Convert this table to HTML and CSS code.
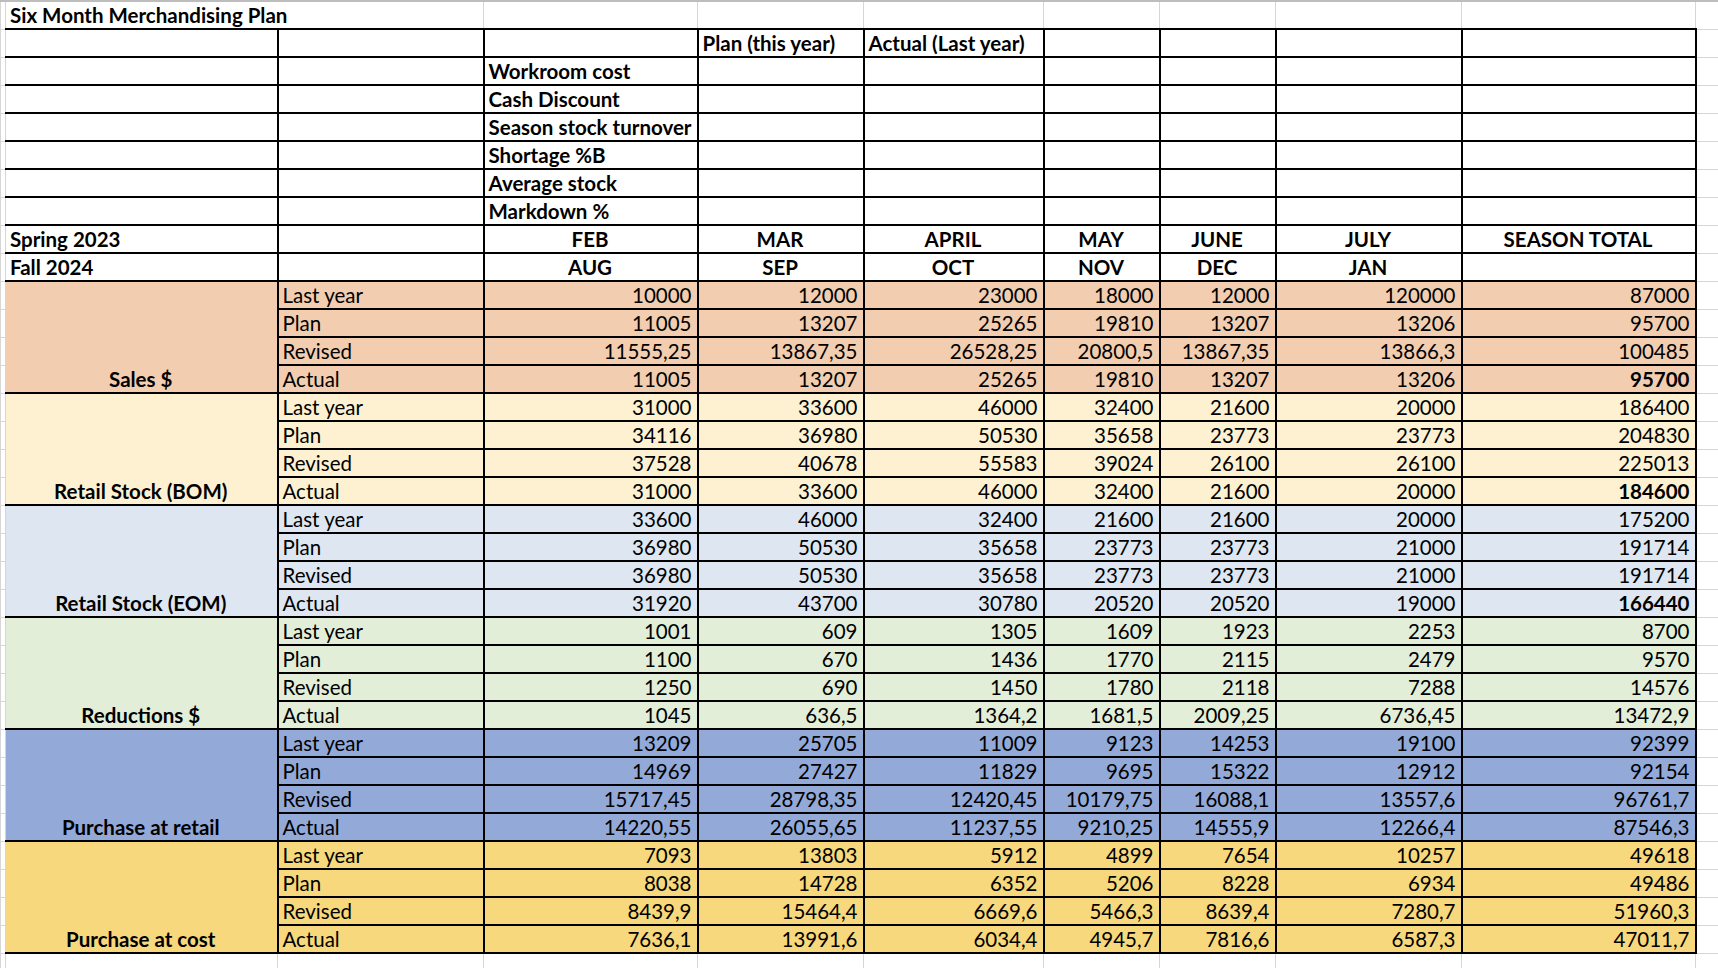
FILE: index.html
```html
<!DOCTYPE html>
<html lang="en">
<head>
<meta charset="utf-8">
<title>Six Month Merchandising Plan</title>
<link rel="stylesheet" href="styles.css">
</head>
<body>
<table class="sheet">
  <colgroup>
    <col class="w-stub"><col class="w-a"><col class="w-b"><col class="w-c"><col class="w-d"><col class="w-e"><col class="w-f"><col class="w-g"><col class="w-h"><col class="w-i"><col class="w-rstub">
  </colgroup>
  <tbody>
    <tr class="top">
      <td class="stub"></td><td class="bold" colspan="2">Six Month Merchandising Plan</td><td></td><td></td><td></td><td></td><td></td><td></td><td></td><td class="rstub"></td>
    </tr>
    <tr class="t">
      <td class="stub"></td><td class="ca"></td><td></td><td></td><td class="bold">Plan (this year)</td><td class="bold">Actual (Last year)</td><td></td><td></td><td></td><td></td><td class="rstub"></td>
    </tr>
    <tr class="t">
      <td class="stub"></td><td class="ca"></td><td></td><td class="bold">Workroom cost</td><td></td><td></td><td></td><td></td><td></td><td></td><td class="rstub"></td>
    </tr>
    <tr class="t">
      <td class="stub"></td><td class="ca"></td><td></td><td class="bold">Cash Discount</td><td></td><td></td><td></td><td></td><td></td><td></td><td class="rstub"></td>
    </tr>
    <tr class="t">
      <td class="stub"></td><td class="ca"></td><td></td><td class="bold">Season stock turnover</td><td></td><td></td><td></td><td></td><td></td><td></td><td class="rstub"></td>
    </tr>
    <tr class="t">
      <td class="stub"></td><td class="ca"></td><td></td><td class="bold">Shortage %B</td><td></td><td></td><td></td><td></td><td></td><td></td><td class="rstub"></td>
    </tr>
    <tr class="t">
      <td class="stub"></td><td class="ca"></td><td></td><td class="bold">Average stock</td><td></td><td></td><td></td><td></td><td></td><td></td><td class="rstub"></td>
    </tr>
    <tr class="t">
      <td class="stub"></td><td class="ca"></td><td></td><td class="bold">Markdown %</td><td></td><td></td><td></td><td></td><td></td><td></td><td class="rstub"></td>
    </tr>
    <tr class="t">
      <td class="stub"></td><td class="ca bold">Spring 2023</td><td></td><td class="hd">FEB</td><td class="hd">MAR</td><td class="hd">APRIL</td><td class="hd">MAY</td><td class="hd">JUNE</td><td class="hd">JULY</td><td class="hd">SEASON TOTAL</td><td class="rstub"></td>
    </tr>
    <tr class="t">
      <td class="stub"></td><td class="ca bold">Fall 2024</td><td></td><td class="hd">AUG</td><td class="hd">SEP</td><td class="hd">OCT</td><td class="hd">NOV</td><td class="hd">DEC</td><td class="hd">JAN</td><td></td><td class="rstub"></td>
    </tr>

    <tr class="t sales">
      <td class="stub"></td><td class="ca grp" rowspan="4">Sales $</td><td>Last year</td><td class="n">10000</td><td class="n">12000</td><td class="n">23000</td><td class="n">18000</td><td class="n">12000</td><td class="n">120000</td><td class="n">87000</td><td class="rstub"></td>
    </tr>
    <tr class="t sales">
      <td class="stub"></td><td>Plan</td><td class="n">11005</td><td class="n">13207</td><td class="n">25265</td><td class="n">19810</td><td class="n">13207</td><td class="n">13206</td><td class="n">95700</td><td class="rstub"></td>
    </tr>
    <tr class="t sales">
      <td class="stub"></td><td>Revised</td><td class="n">11555,25</td><td class="n">13867,35</td><td class="n">26528,25</td><td class="n">20800,5</td><td class="n">13867,35</td><td class="n">13866,3</td><td class="n">100485</td><td class="rstub"></td>
    </tr>
    <tr class="t sales">
      <td class="stub"></td><td>Actual</td><td class="n">11005</td><td class="n">13207</td><td class="n">25265</td><td class="n">19810</td><td class="n">13207</td><td class="n">13206</td><td class="n bold">95700</td><td class="rstub"></td>
    </tr>

    <tr class="t bom">
      <td class="stub"></td><td class="ca grp" rowspan="4">Retail Stock (BOM)</td><td>Last year</td><td class="n">31000</td><td class="n">33600</td><td class="n">46000</td><td class="n">32400</td><td class="n">21600</td><td class="n">20000</td><td class="n">186400</td><td class="rstub"></td>
    </tr>
    <tr class="t bom">
      <td class="stub"></td><td>Plan</td><td class="n">34116</td><td class="n">36980</td><td class="n">50530</td><td class="n">35658</td><td class="n">23773</td><td class="n">23773</td><td class="n">204830</td><td class="rstub"></td>
    </tr>
    <tr class="t bom">
      <td class="stub"></td><td>Revised</td><td class="n">37528</td><td class="n">40678</td><td class="n">55583</td><td class="n">39024</td><td class="n">26100</td><td class="n">26100</td><td class="n">225013</td><td class="rstub"></td>
    </tr>
    <tr class="t bom">
      <td class="stub"></td><td>Actual</td><td class="n">31000</td><td class="n">33600</td><td class="n">46000</td><td class="n">32400</td><td class="n">21600</td><td class="n">20000</td><td class="n bold">184600</td><td class="rstub"></td>
    </tr>

    <tr class="t eom">
      <td class="stub"></td><td class="ca grp" rowspan="4">Retail Stock (EOM)</td><td>Last year</td><td class="n">33600</td><td class="n">46000</td><td class="n">32400</td><td class="n">21600</td><td class="n">21600</td><td class="n">20000</td><td class="n">175200</td><td class="rstub"></td>
    </tr>
    <tr class="t eom">
      <td class="stub"></td><td>Plan</td><td class="n">36980</td><td class="n">50530</td><td class="n">35658</td><td class="n">23773</td><td class="n">23773</td><td class="n">21000</td><td class="n">191714</td><td class="rstub"></td>
    </tr>
    <tr class="t eom">
      <td class="stub"></td><td>Revised</td><td class="n">36980</td><td class="n">50530</td><td class="n">35658</td><td class="n">23773</td><td class="n">23773</td><td class="n">21000</td><td class="n">191714</td><td class="rstub"></td>
    </tr>
    <tr class="t eom">
      <td class="stub"></td><td>Actual</td><td class="n">31920</td><td class="n">43700</td><td class="n">30780</td><td class="n">20520</td><td class="n">20520</td><td class="n">19000</td><td class="n bold">166440</td><td class="rstub"></td>
    </tr>

    <tr class="t red">
      <td class="stub"></td><td class="ca grp" rowspan="4">Reductions $</td><td>Last year</td><td class="n">1001</td><td class="n">609</td><td class="n">1305</td><td class="n">1609</td><td class="n">1923</td><td class="n">2253</td><td class="n">8700</td><td class="rstub"></td>
    </tr>
    <tr class="t red">
      <td class="stub"></td><td>Plan</td><td class="n">1100</td><td class="n">670</td><td class="n">1436</td><td class="n">1770</td><td class="n">2115</td><td class="n">2479</td><td class="n">9570</td><td class="rstub"></td>
    </tr>
    <tr class="t red">
      <td class="stub"></td><td>Revised</td><td class="n">1250</td><td class="n">690</td><td class="n">1450</td><td class="n">1780</td><td class="n">2118</td><td class="n">7288</td><td class="n">14576</td><td class="rstub"></td>
    </tr>
    <tr class="t red">
      <td class="stub"></td><td>Actual</td><td class="n">1045</td><td class="n">636,5</td><td class="n">1364,2</td><td class="n">1681,5</td><td class="n">2009,25</td><td class="n">6736,45</td><td class="n">13472,9</td><td class="rstub"></td>
    </tr>

    <tr class="t pr">
      <td class="stub"></td><td class="ca grp" rowspan="4">Purchase at retail</td><td>Last year</td><td class="n">13209</td><td class="n">25705</td><td class="n">11009</td><td class="n">9123</td><td class="n">14253</td><td class="n">19100</td><td class="n">92399</td><td class="rstub"></td>
    </tr>
    <tr class="t pr">
      <td class="stub"></td><td>Plan</td><td class="n">14969</td><td class="n">27427</td><td class="n">11829</td><td class="n">9695</td><td class="n">15322</td><td class="n">12912</td><td class="n">92154</td><td class="rstub"></td>
    </tr>
    <tr class="t pr">
      <td class="stub"></td><td>Revised</td><td class="n">15717,45</td><td class="n">28798,35</td><td class="n">12420,45</td><td class="n">10179,75</td><td class="n">16088,1</td><td class="n">13557,6</td><td class="n">96761,7</td><td class="rstub"></td>
    </tr>
    <tr class="t pr">
      <td class="stub"></td><td>Actual</td><td class="n">14220,55</td><td class="n">26055,65</td><td class="n">11237,55</td><td class="n">9210,25</td><td class="n">14555,9</td><td class="n">12266,4</td><td class="n">87546,3</td><td class="rstub"></td>
    </tr>

    <tr class="t pc">
      <td class="stub"></td><td class="ca grp" rowspan="4">Purchase at cost</td><td>Last year</td><td class="n">7093</td><td class="n">13803</td><td class="n">5912</td><td class="n">4899</td><td class="n">7654</td><td class="n">10257</td><td class="n">49618</td><td class="rstub"></td>
    </tr>
    <tr class="t pc">
      <td class="stub"></td><td>Plan</td><td class="n">8038</td><td class="n">14728</td><td class="n">6352</td><td class="n">5206</td><td class="n">8228</td><td class="n">6934</td><td class="n">49486</td><td class="rstub"></td>
    </tr>
    <tr class="t pc">
      <td class="stub"></td><td>Revised</td><td class="n">8439,9</td><td class="n">15464,4</td><td class="n">6669,6</td><td class="n">5466,3</td><td class="n">8639,4</td><td class="n">7280,7</td><td class="n">51960,3</td><td class="rstub"></td>
    </tr>
    <tr class="t pc">
      <td class="stub"></td><td>Actual</td><td class="n">7636,1</td><td class="n">13991,6</td><td class="n">6034,4</td><td class="n">4945,7</td><td class="n">7816,6</td><td class="n">6587,3</td><td class="n">47011,7</td><td class="rstub"></td>
    </tr>

    <tr class="bot">
      <td class="stub"></td><td></td><td></td><td></td><td></td><td></td><td></td><td></td><td></td><td></td><td class="rstub"></td>
    </tr>
  </tbody>
</table>
</body>
</html>
```

FILE: styles.css
```css
html, body {
  margin: 0;
  padding: 0;
  background: #ffffff;
}

body {
  font-family: Lato, "Liberation Sans", sans-serif;
  font-size: 20.5px;
  color: #000000;
  overflow: hidden;
  width: 1718px;
  height: 968px;
}

.sheet {
  border-collapse: collapse;
  table-layout: fixed;
  width: 1718px;
}

.w-stub { width: 5px; }
.w-a { width: 272px; }
.w-b { width: 206px; }
.w-c { width: 214px; }
.w-d { width: 166px; }
.w-e { width: 180px; }
.w-f { width: 116px; }
.w-g { width: 116px; }
.w-h { width: 186px; }
.w-i { width: 234px; }
.w-rstub { width: 23px; }

.sheet tr {
  height: 28px;
}

.sheet td {
  border: 1px solid #d6d6d6;
  padding: 0 5px 2px 4px;
  vertical-align: bottom;
  white-space: nowrap;
  overflow: hidden;
  line-height: 22px;
  text-align: left;
}

/* title row */
.sheet tr.top {
  height: 28px;
}
.sheet tr.top td {
  border-top: 2px solid #bdbdbd;
}
.sheet tr.top td:not(.stub):not(.rstub) {
  border-bottom: 2px solid #000000;
}

/* bordered table region */
.sheet tr.t td {
  border: 2px solid #000000;
}
.sheet tr.t td.ca {
  border-left: none;
}
.sheet tr td.stub,
.sheet tr td.rstub {
  border: 1px solid #d6d6d6;
  padding: 0;
  background: #ffffff;
}
.sheet tr.top td.stub,
.sheet tr.top td.rstub {
  border-top: 2px solid #bdbdbd;
}

.sheet tr.bot {
  height: 15px;
}

.bold {
  font-weight: 700;
}

.hd {
  font-weight: 700;
  text-align: center;
}

.sheet td.hd {
  text-align: center;
}

.sheet td.n {
  text-align: right;
  font-variant-numeric: tabular-nums;
}

.sheet td.grp {
  font-weight: 700;
  text-align: center;
}

/* group fills */
.sheet tr.sales td { background: #f2cdb0; }
.sheet tr.bom td { background: #fdf1d1; }
.sheet tr.eom td { background: #dee6f1; }
.sheet tr.red td { background: #e3eed9; }
.sheet tr.pr td { background: #93a9d8; }
.sheet tr.pc td { background: #f7d87c; }

.sheet tr td.stub,
.sheet tr td.rstub {
  background: #ffffff;
}
```
